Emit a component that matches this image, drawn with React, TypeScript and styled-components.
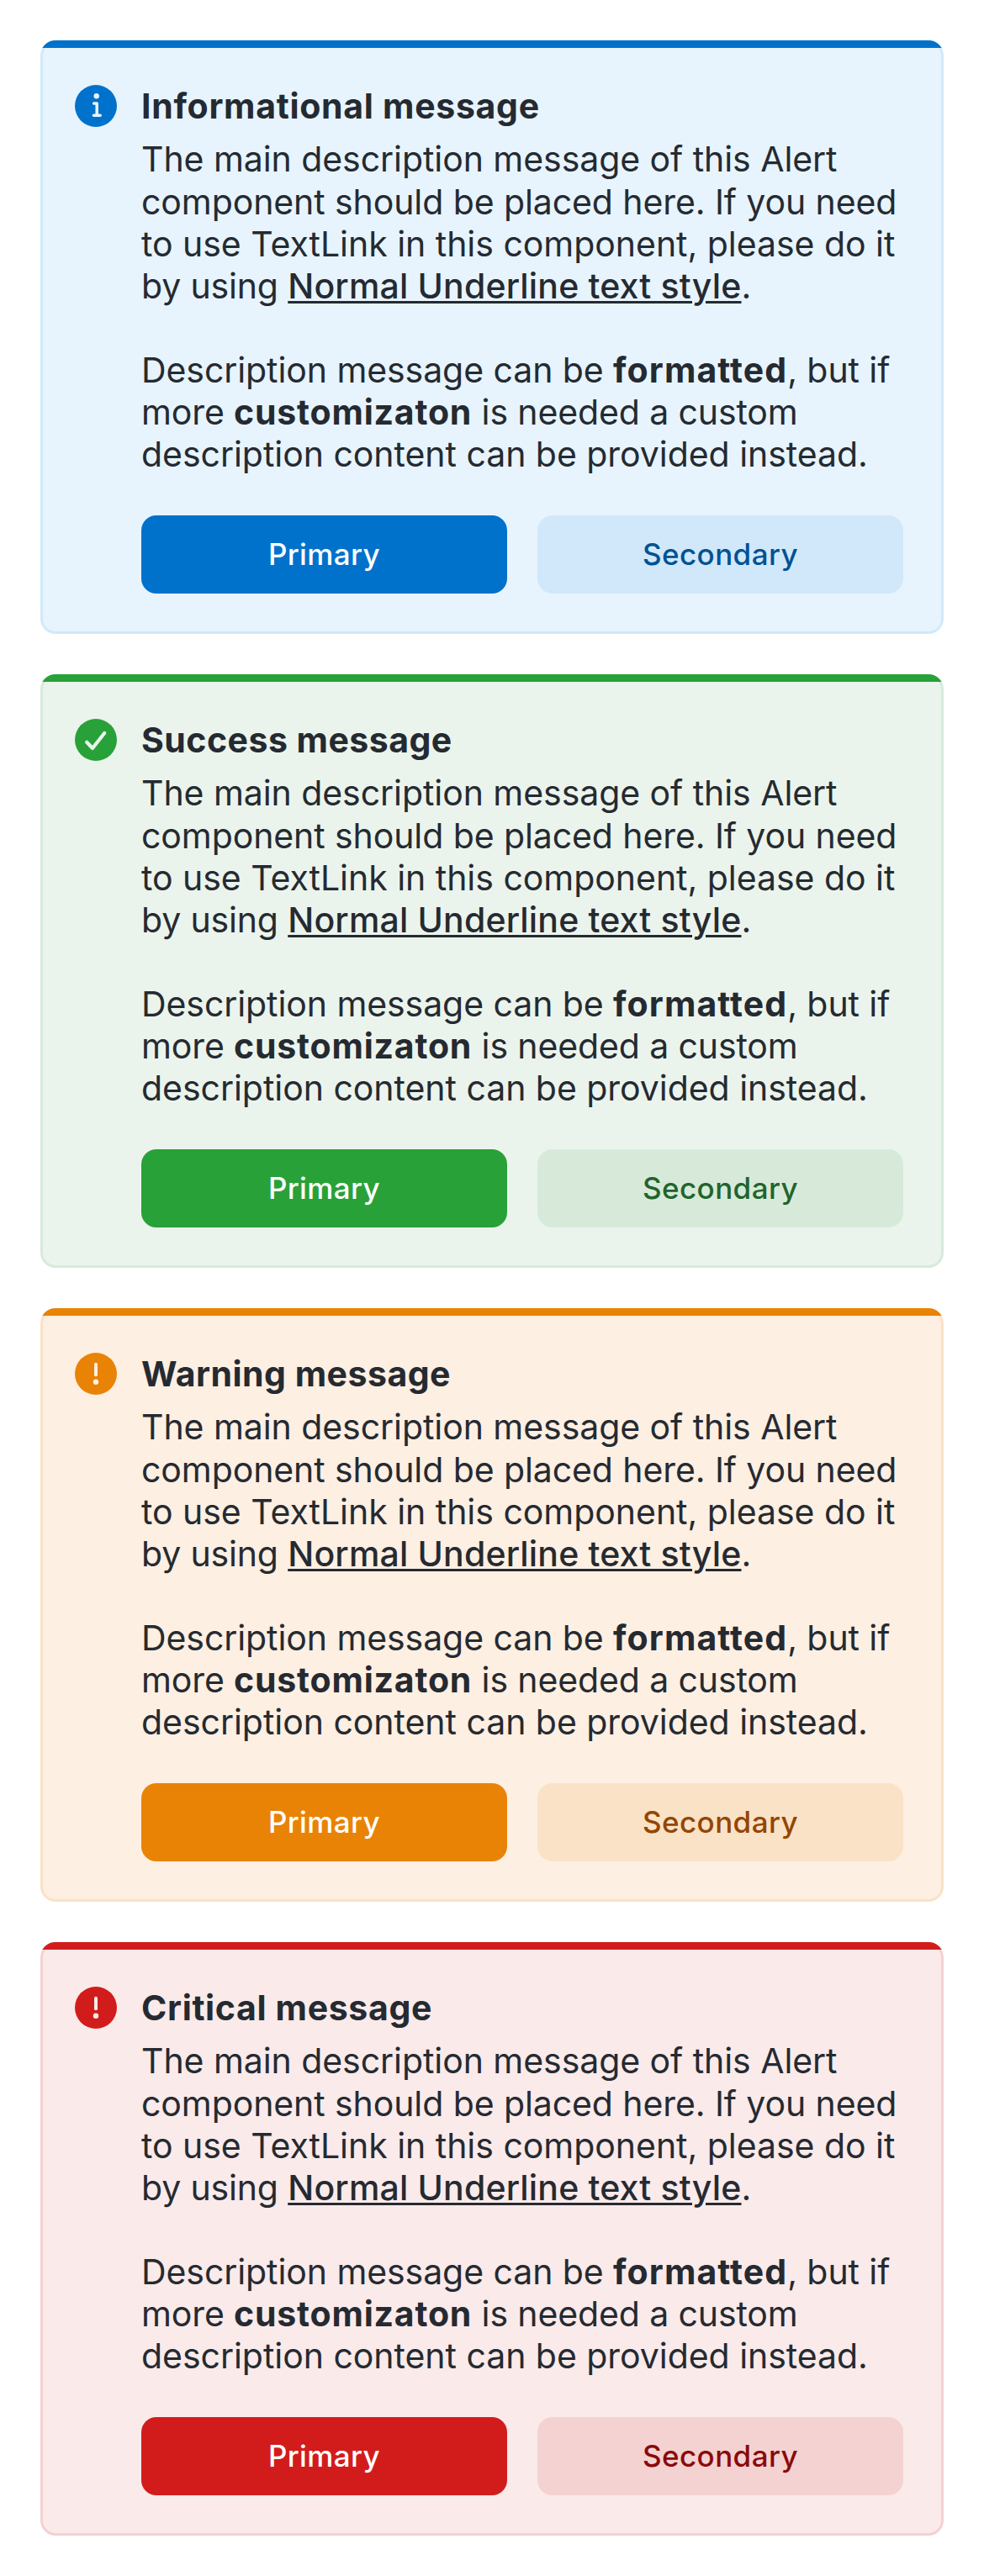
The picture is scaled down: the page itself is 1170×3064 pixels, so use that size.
import React from "react";
import styled, { createGlobalStyle } from "styled-components";

type Kind = "info" | "success" | "warning" | "critical";

interface Tone {
  kind: Kind;
  title: string;
  tracking: number;
  main: string;
  surface: string;
  border: string;
  soft: string;
  softText: string;
}

const tones: Tone[] = [
  { kind: "info", title: "Informational message", tracking: 0.7, main: "#0172cb", surface: "#e7f4fd", border: "#d0e9fb", soft: "#d1e8fb", softText: "#005293" },
  { kind: "success", title: "Success message", tracking: 0.48, main: "#28a138", surface: "#ebf4ec", border: "#d7eada", soft: "#d7eada", softText: "#22642c" },
  { kind: "warning", title: "Warning message", tracking: 0.49, main: "#e98305", surface: "#fdefe2", border: "#fae2c6", soft: "#fae2c7", softText: "#934600" },
  { kind: "critical", title: "Critical message", tracking: 0.65, main: "#d21c1c", surface: "#faeaea", border: "#f4d1d1", soft: "#f4d2d2", softText: "#8a0a0a" },
];

const GlobalStyle = createGlobalStyle`
  body {
    margin: 0;
    background: #ffffff;
    color: #252a31;
    font-family: Inter, "Liberation Sans", sans-serif;
  }
`;

const Page = styled.main`
  box-sizing: border-box;
  width: 1170px;
  height: 3064px;
  padding: 48px;
  display: flex;
  flex-direction: column;
  gap: 48px;
`;

const Card = styled.section<{ $tone: Tone }>`
  height: 706px;
  border-radius: 18px;
  overflow: hidden;
  display: flex;
  flex-direction: column;
  background: ${(p) => p.$tone.surface};
`;

const Bar = styled.div<{ $color: string }>`
  flex: none;
  height: 9px;
  background: ${(p) => p.$color};
`;

const Body = styled.div<{ $border: string }>`
  position: relative;
  box-sizing: border-box;
  flex: 1;
  padding: 39px 48px 0 36px;
  display: flex;
  gap: 24px;

  &::after {
    content: "";
    position: absolute;
    inset: -9px 0 0;
    border: 3px solid ${(p) => p.$border};
    border-radius: 18px;
    clip-path: inset(9px 0 0 0);
    pointer-events: none;
  }
`;

const Icon = styled.svg`
  flex: none;
  width: 60px;
  height: 60px;
`;

const Content = styled.div`
  flex: 1;
  min-width: 0;
`;

const Title = styled.h2<{ $tracking: number }>`
  margin: 0;
  height: 68.4px;
  font-size: 41px;
  line-height: 60px;
  font-weight: 700;
  letter-spacing: ${(p) => p.$tracking}px;
  white-space: nowrap;
`;

const Text = styled.p`
  margin: 0 0 50px;
  font-size: 41px;
  line-height: 50.14px;
  white-space: nowrap;

  &:last-of-type {
    margin-bottom: 47.6px;
  }
`;

const Line = styled.span<{ $tracking: number }>`
  display: block;
  letter-spacing: ${(p) => p.$tracking}px;
`;

const Strong = styled.b<{ $tracking: number }>`
  font-weight: 700;
  letter-spacing: ${(p) => p.$tracking}px;
`;

const TextLink = styled.a`
  font-weight: 500;
  letter-spacing: 0.17px;
  text-decoration: underline;
  text-decoration-thickness: 3px;
  text-underline-offset: 3px;
`;

const Actions = styled.div`
  display: grid;
  grid-template-columns: 1fr 1fr;
  gap: 36px;
`;

const Button = styled.button<{ $bg: string; $fg: string }>`
  height: 93px;
  padding: 0;
  border: 0;
  border-radius: 18px;
  background: ${(p) => p.$bg};
  color: ${(p) => p.$fg};
  font: 500 35px/93px Inter, "Liberation Sans", sans-serif;
  letter-spacing: 0.4px;
`;

function StatusIcon({ tone }: { tone: Tone }) {
  const stroke = { fill: "none", stroke: tone.surface, strokeLinecap: "round" as const, strokeLinejoin: "round" as const };
  return (
    <Icon viewBox="0 0 60 60" aria-hidden="true">
      <circle cx="30" cy="30" r="25" fill={tone.main} />
      {tone.kind === "info" && (
        <>
          <circle cx="30.7" cy="18.3" r="3.2" fill={tone.surface} />
          <path d="M27.6 27H31.2V41.2M27.4 41.2H35.2" strokeWidth="3.5" {...stroke} />
        </>
      )}
      {tone.kind === "success" && <path d="M19.2 32.8L26 40L40.2 22" strokeWidth="4.2" {...stroke} />}
      {(tone.kind === "warning" || tone.kind === "critical") && (
        <>
          <path d="M30 18.8V31.2" strokeWidth="4" {...stroke} />
          <circle cx="30" cy="39.8" r="3.2" fill={tone.surface} />
        </>
      )}
    </Icon>
  );
}

function Alert({ tone }: { tone: Tone }) {
  return (
    <Card $tone={tone}>
      <Bar $color={tone.main} />
      <Body $border={tone.border}>
        <StatusIcon tone={tone} />
        <Content>
          <Title $tracking={tone.tracking}>{tone.title}</Title>
          <Text>
            <Line $tracking={-0.06}>The main description message of this Alert</Line>
            <Line $tracking={-0.09}>component should be placed here. If you need</Line>
            <Line $tracking={-0.03}>to use TextLink in this component, please do it</Line>
            <Line $tracking={-0.15}>
              by using <TextLink>Normal Underline text style</TextLink>.
            </Line>
          </Text>
          <Text>
            <Line $tracking={-0.08}>
              Description message can be <Strong $tracking={1.1}>formatted</Strong>, but if
            </Line>
            <Line $tracking={-0.12}>
              more <Strong $tracking={0.8}>customizaton</Strong> is needed a custom
            </Line>
            <Line $tracking={-0.04}>description content can be provided instead.</Line>
          </Text>
          <Actions>
            <Button $bg={tone.main} $fg="#ffffff">Primary</Button>
            <Button $bg={tone.soft} $fg={tone.softText}>Secondary</Button>
          </Actions>
        </Content>
      </Body>
    </Card>
  );
}

export default function App() {
  return (
    <>
      <GlobalStyle />
      <Page>
        {tones.map((tone) => (
          <Alert key={tone.kind} tone={tone} />
        ))}
      </Page>
    </>
  );
}
